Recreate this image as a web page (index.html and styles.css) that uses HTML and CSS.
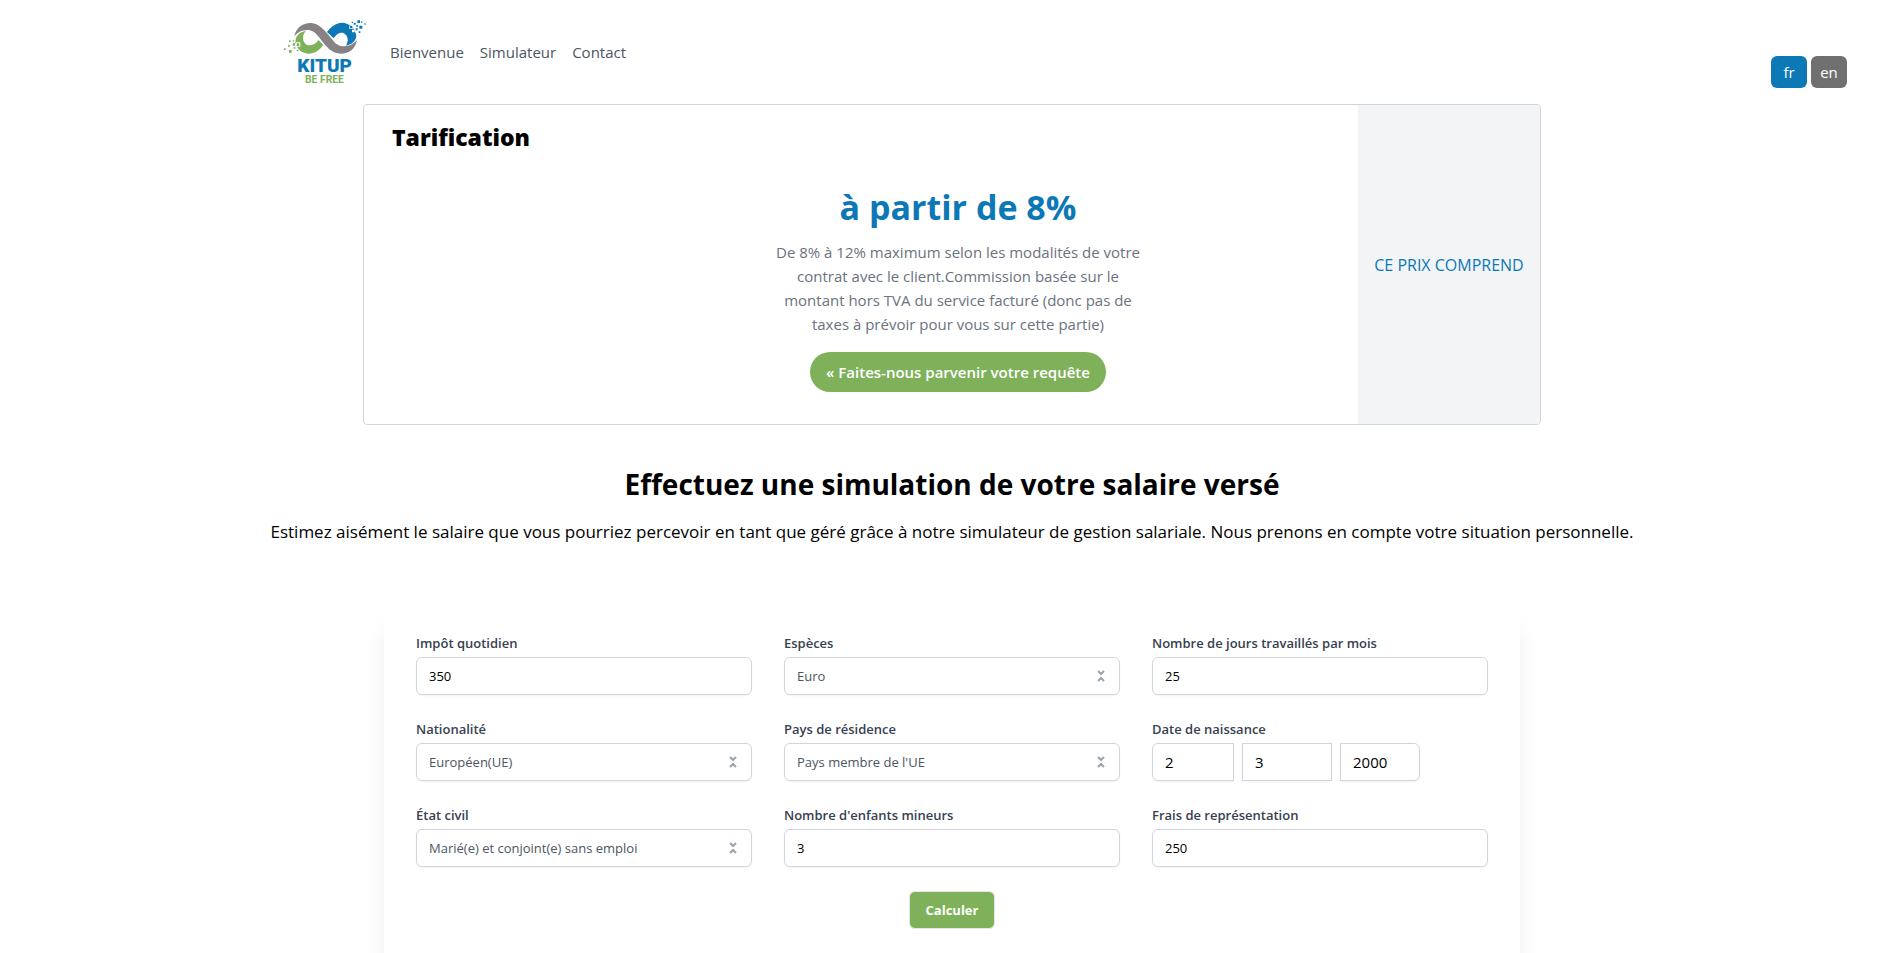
FILE: index.html
```html
<!DOCTYPE html>
<html lang="fr">
<head>
  <meta charset="UTF-8" />
  <meta name="viewport" content="width=device-width, initial-scale=1.0"/>
  <title>KITUP - Simulateur</title>
  <link rel="stylesheet" href="styles.css">
</head>
<body>
  <!-- shared select arrow -->
  <svg class="sprite" width="0" height="0" aria-hidden="true">
    <symbol id="arrows" viewBox="0 0 8 12">
      <path d="M1 1l3 3 3-3M1 11l3-3 3 3" fill="none" stroke="currentColor" stroke-width="2"/>
    </symbol>
  </svg>

  <header>
    <div class="menu">
      <a class="logo" href="index.html" aria-label="KITUP">
        <svg width="90" height="70" viewBox="30 50 270 210">
          <path fill="#7fb15b" d="M108 92C88 94 76 108 76 126c4 22 21 34 42 34 20-1 32-13 42-26l-14-15c-8 11-18 17-31 16-10-3-15-11-16-20 0-10 3-17 9-23z"/>
          <path fill="#0c78b6" d="M171 95c11-15 26-27 45-28 23 1 41 18 43 41-2 14-13 25-31 28 7-11 7-25-1-33-11-10-23-7-36 11z"/>
          <path fill="#868286" d="M73 108c5-26 25-41 51-40 22 2 36 18 51 35 13 15 22 31 38 34 21 3 37-5 48-18-5 27-23 41-49 41-24-1-36-14-49-29-15-18-25-39-46-42-19-2-35 7-44 19z"/>
          <path fill="#fff" d="M78 126h13v13h-13zM238 76h10v10h-10zM246 88h8v8h-8z"/>
          <path fill="#7fb15b" d="M80 129h8v8h-8zM68 129h7v7h-7zM57 120h5v5h-5zM42 144h5v5h-5zM57 149h8v8h-8zM71 140h5v5h-5zM80 148h5v5h-5zM54 134h5v5h-5zM68 120h4v4h-4z"/>
          <path fill="#0c78b6" d="M240 77h7v7h-7zM251 67h6v6h-6zM262 60h8v8h-8zM273 63h4v4h-4zM283 69h4v4h-4zM268 76h9v9h-9zM259 74h5v5h-5zM257 84h6v6h-6zM266 93h5v5h-5zM245 64h4v4h-4z"/>
          <text class="logo-name" x="82" y="214">KITUP</text>
          <text class="logo-tag" x="105" y="249">BE FREE</text>
        </svg>
      </a>
      <nav>
        <a href="#">Bienvenue</a>
        <a href="#simulateur">Simulateur</a>
        <a href="#contact">Contact</a>
      </nav>
    </div>
    <div class="lang">
      <button class="active" type="button">fr</button>
      <button type="button">en</button>
    </div>
  </header>

  <section class="pricing">
    <div class="pricing-main">
      <h3>Tarification</h3>
      <div class="offer">
        <p class="price">à partir de 8%</p>
        <p class="details">De 8% à 12% maximum selon les modalités de votre contrat avec le client.Commission basée sur le montant hors TVA du service facturé (donc pas de taxes à prévoir pour vous sur cette partie)</p>
        <button class="btn-request" type="button">« Faites-nous parvenir votre requête</button>
      </div>
    </div>
    <div class="includes">CE PRIX COMPREND</div>
  </section>

  <section class="intro" id="simulateur">
    <h2>Effectuez une simulation de votre salaire versé</h2>
    <p>Estimez aisément le salaire que vous pourriez percevoir en tant que géré grâce à notre simulateur de gestion salariale. Nous prenons en compte votre situation personnelle.</p>
  </section>

  <form class="simulator">
    <div class="fields">
      <div class="field">
        <label for="rate">Impôt quotidien</label>
        <input id="rate" type="text" value="350">
      </div>
      <div class="field">
        <label for="currency">Espèces</label>
        <div class="select">
          <select id="currency"><option>Euro</option></select>
          <svg width="8" height="12"><use href="#arrows"/></svg>
        </div>
      </div>
      <div class="field">
        <label for="days">Nombre de jours travaillés par mois</label>
        <input id="days" type="text" value="25">
      </div>
      <div class="field">
        <label for="nationality">Nationalité</label>
        <div class="select">
          <select id="nationality"><option>Européen(UE)</option></select>
          <svg width="8" height="12"><use href="#arrows"/></svg>
        </div>
      </div>
      <div class="field">
        <label for="country">Pays de résidence</label>
        <div class="select">
          <select id="country"><option>Pays membre de l'UE</option></select>
          <svg width="8" height="12"><use href="#arrows"/></svg>
        </div>
      </div>
      <div class="field">
        <label for="birth-day">Date de naissance</label>
        <div class="birth">
          <input class="day" id="birth-day" type="text" value="2">
          <input class="month" type="text" value="3" aria-label="Mois">
          <input class="year" type="text" value="2000" aria-label="Année">
        </div>
      </div>
      <div class="field">
        <label for="status">État civil</label>
        <div class="select">
          <select id="status"><option>Marié(e) et conjoint(e) sans emploi</option></select>
          <svg width="8" height="12"><use href="#arrows"/></svg>
        </div>
      </div>
      <div class="field">
        <label for="children">Nombre d'enfants mineurs</label>
        <input id="children" type="text" value="3">
      </div>
      <div class="field">
        <label for="expenses">Frais de représentation</label>
        <input id="expenses" type="text" value="250">
      </div>
    </div>
    <button class="btn-calc" type="button">Calculer</button>
  </form>
</body>
</html>
```

FILE: styles.css
```css
* { box-sizing: border-box; margin: 0; padding: 0; }
body {
  font-family: 'Segoe UI', 'Open Sans', sans-serif;
  font-size: 15px;
  line-height: 24px;
  background: #fff;
  color: #000;
  padding-left: 4px;
}
button, input, select {
  font-family: inherit;
}
button {
  border: none;
  cursor: pointer;
}
.sprite {
  display: block;
}

header {
  display: grid;
  grid-template-columns: 1fr minmax(0, 1344px) 1fr;
  min-height: 104px;
}
.menu {
  grid-column: 2;
  display: flex;
  align-items: center;
  gap: 20px;
}
.logo svg {
  display: block;
}
.logo-name {
  font: 900 57px Roboto, sans-serif;
  fill: #0c78b6;
}
.logo-tag {
  font: 700 31px Roboto, sans-serif;
  fill: #7fb15b;
}
nav {
  display: flex;
  gap: 16px;
}
nav a {
  color: #4b5563;
  text-decoration: none;
}
nav a:hover {
  color: #0c78b6;
}
.lang {
  display: flex;
  gap: 4px;
  justify-self: end;
  align-self: start;
  margin: 56px 53px 0 0;
}
.lang button {
  width: 36px;
  height: 32px;
  border-radius: 6px;
  background: #707070;
  color: #fff;
  font-size: 15px;
}
.lang .active {
  background: #0c78b6;
}

.pricing {
  display: flex;
  max-width: 1178px;
  margin: 0 auto;
  border: 1px solid #d1d5db;
  border-radius: 4px;
  overflow: hidden;
}
.pricing-main {
  flex: 1;
  padding: 16px 0 32px;
}
.pricing h3 {
  padding-left: 28px;
  font-size: 23px;
  font-weight: 800;
  line-height: 32px;
}
.offer {
  display: flex;
  flex-direction: column;
  align-items: center;
  padding-left: 194px;
  margin-top: 34px;
  text-align: center;
}
.price {
  font-size: 34px;
  font-weight: 700;
  line-height: 40px;
  color: #0c78b6;
}
.details {
  max-width: 384px;
  margin: 13px 0 16px;
  color: #6b7280;
}
.btn-request {
  height: 40px;
  padding: 0 16px;
  border-radius: 20px;
  background: #7fb15b;
  color: #fff;
  font-size: 15px;
  font-weight: 600;
}
.includes {
  display: flex;
  align-items: center;
  justify-content: center;
  width: 182px;
  background: #f3f4f6;
  color: #0c78b6;
  font-size: 16px;
  font-weight: 500;
}

.intro {
  padding: 41px 16px 0;
  text-align: center;
}
.intro h2 {
  font-size: 28px;
  font-weight: 700;
  line-height: 36px;
}
.intro p {
  margin-top: 16px;
  font-size: 17px;
  line-height: 28px;
}

.simulator {
  max-width: 1136px;
  margin: 63px auto 0;
  padding: 24px 32px 64px;
  background: #fff;
  box-shadow: 0 20px 25px -5px rgba(0,0,0,0.1);
}
.fields {
  display: grid;
  grid-template-columns: repeat(3, 1fr);
  gap: 24px 32px;
}
.field label {
  display: block;
  margin-bottom: 4px;
  font-size: 13px;
  font-weight: 600;
  line-height: 20px;
  color: #374151;
}
.field input, .field select {
  display: block;
  width: 100%;
  height: 38px;
  padding: 0 12px;
  border: 1px solid #d1d5db;
  border-radius: 6px;
  background: #fff;
  box-shadow: 0 1px 2px rgba(0,0,0,0.05);
  font-size: 13px;
  color: #000;
}
.field select {
  appearance: none;
  color: #4b5563;
}
.select {
  display: grid;
  align-items: center;
}
.select select, .select svg {
  grid-area: 1 / 1;
}
.select svg {
  justify-self: end;
  margin-right: 15px;
  color: #9ca3af;
  pointer-events: none;
}
.birth {
  display: flex;
  gap: 8px;
}
.birth input {
  font-size: 15px;
}
.birth .day {
  width: 82px;
  border-radius: 6px 0 0 6px;
}
.birth .month {
  width: 90px;
  border-radius: 0;
}
.birth .year {
  width: 80px;
  border-radius: 0 6px 6px 0;
}
.btn-calc {
  display: block;
  height: 38px;
  margin: 24px auto 0;
  padding: 0 16px;
  border: 1px solid #e5e7eb;
  border-radius: 6px;
  background: #7fb15b;
  color: #fff;
  font-size: 13px;
  font-weight: 700;
}
```
